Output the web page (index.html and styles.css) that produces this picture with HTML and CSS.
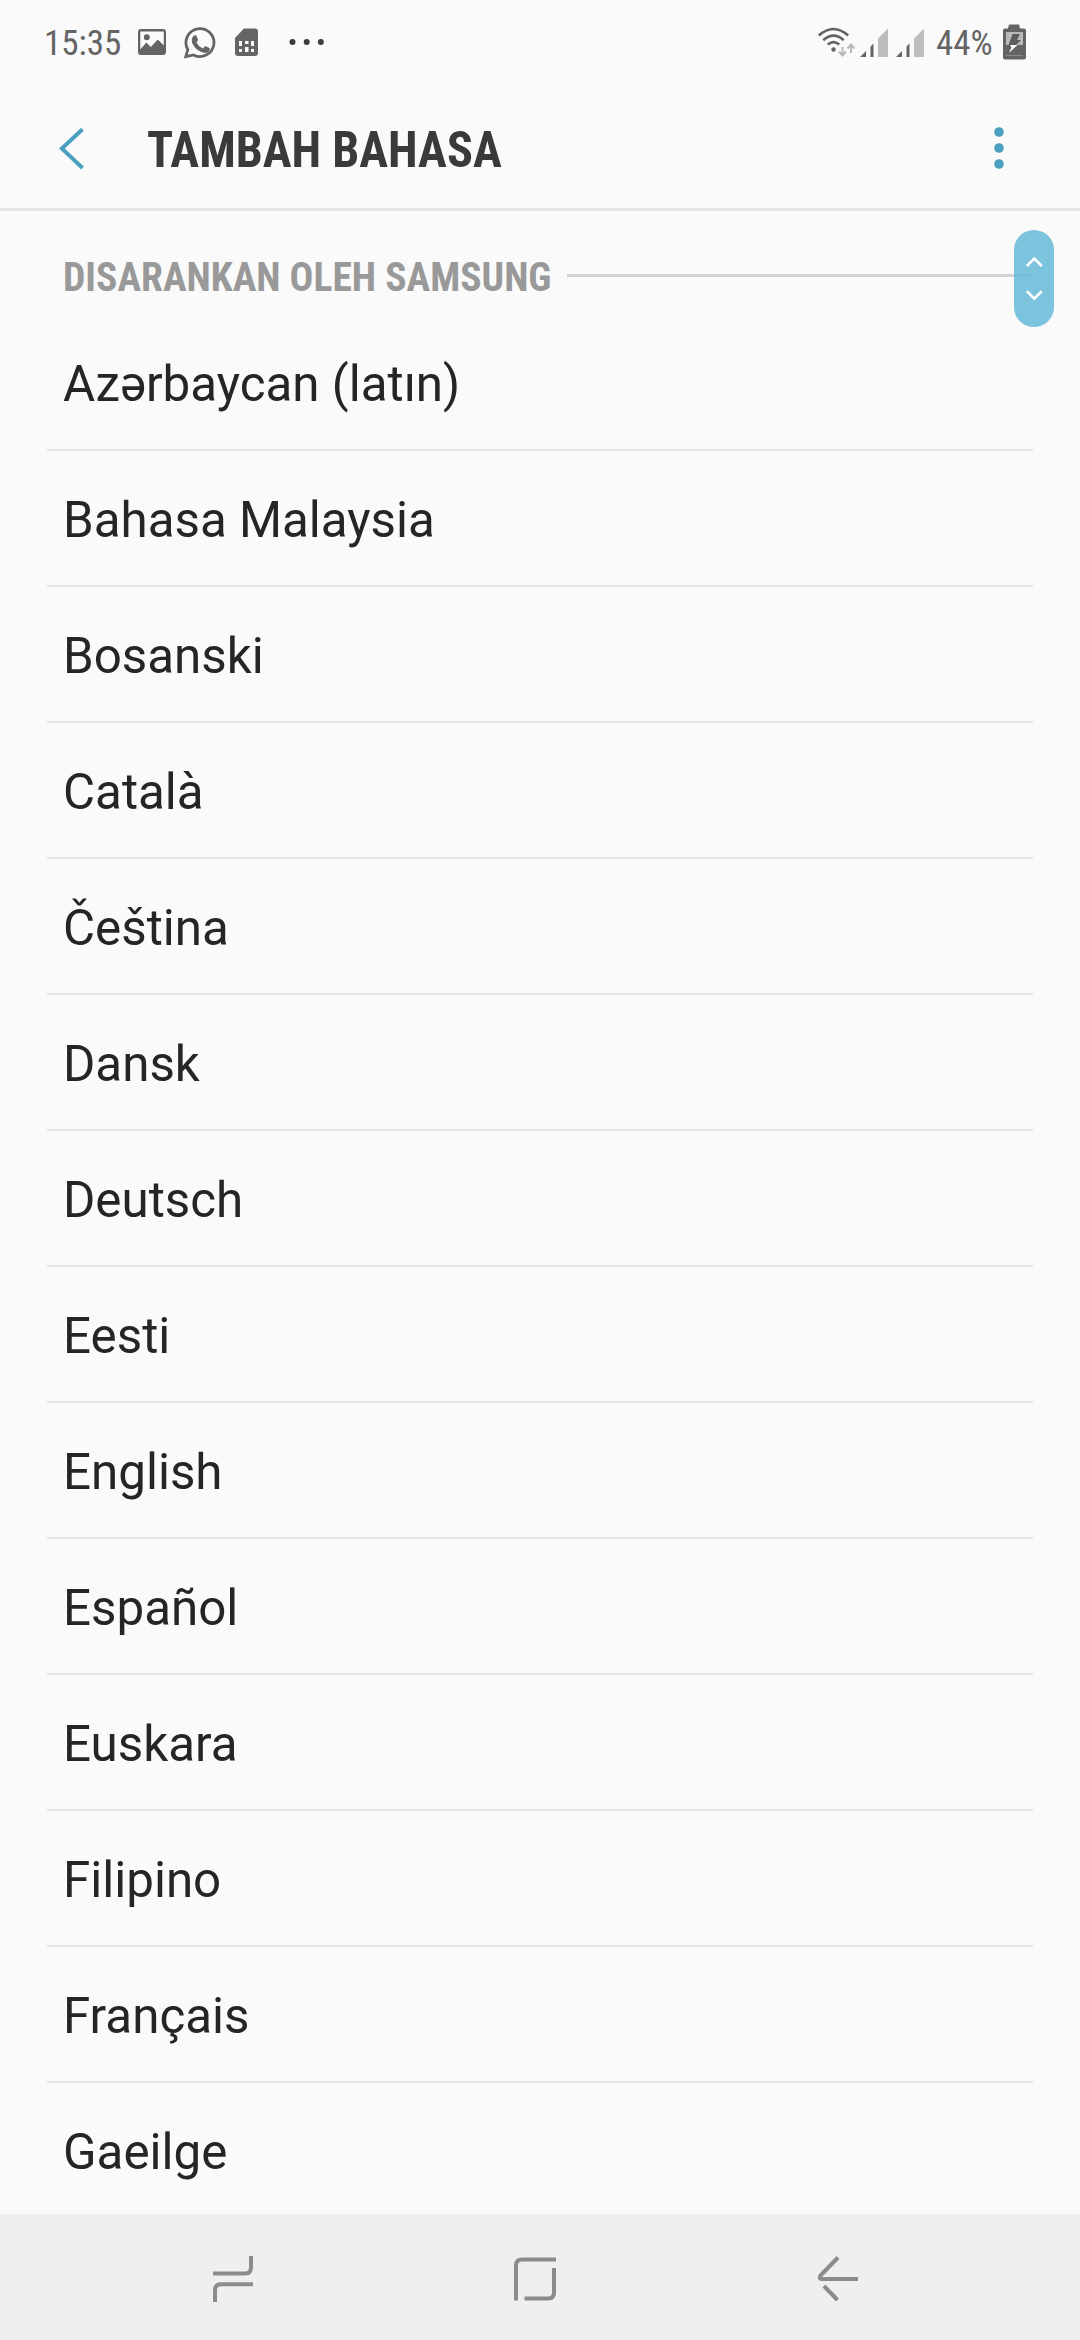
FILE: index.html
```html
<!DOCTYPE html>
<html lang="ms">
<head>
<meta charset="utf-8">
<title>Tambah bahasa</title>
<link rel="stylesheet" href="styles.css">
</head>
<body>
<div class="screen">
  <div class="status">
    <span class="clock"><span class="clock-text">15:35</span></span>
    <svg class="photo" width="28" height="26" viewBox="138 29 28 26"><path fill="#646464" fill-rule="evenodd" d="M141 29h22q3 0 3 3v20q0 3-3 3h-22q-3 0-3-3V32q0-3 3-3zM140.300 31.500v18l6-7 4.500 4.500 7-7.500 6 6v-14zM146.800 34.300a3 3 0 1 1 0 6 3 3 0 0 1 0-6z"/></svg>
    <svg class="chat" width="32" height="32" viewBox="183.500 27 32 32"><path fill="none" stroke="#646464" stroke-width="2.800" d="M185.300 56.700l2-7.200A14 14 0 1 1 193 55z"/><path fill="#646464" d="M192.600 36.200q1.500-1.700 3.200-.6l1.900 4.300-1.800 2.700q2.200 4.300 6.500 5.900l2.400-2.500 4.500 2.200q.5 2.500-2 4-2.800 1.700-7-.4-6.500-3.200-8.800-9.400-1-3.500 1.100-6.200z"/></svg>
    <svg class="sim" width="24" height="29" viewBox="235 28 24 29"><path fill="#646464" d="M244 28.500h11q3 0 3 3V53q0 3-3 3h-17q-3 0-3-3V38z"/><path fill="#fafafa" d="M239 41h3v5h-3zM245 41h3.500v3H245zM251 41h3v5h-3zM239 49h3v3h-3zM245 47h3.500v5H245zM251 49h3v3h-3z"/></svg>
    <svg class="more" width="36" height="8" viewBox="289 38 36 8"><g fill="#3c3c3c"><circle cx="292.500" cy="42" r="3"/><circle cx="306.700" cy="42" r="3"/><circle cx="320.800" cy="42" r="3"/></g></svg>
    <span class="spacer"></span>
    <svg class="wifi" width="40" height="32" viewBox="816 26 40 32"><g fill="none" stroke="#646464" stroke-width="2.600"><path d="M817.800 35.500q14.700-13 29.400 0M822.300 40.200q10.200-9 20.400 0M826.800 44.600q5.700-4.800 11.400 0"/></g><circle cx="832.500" cy="49.500" r="2.200" fill="#646464"/><path fill="none" stroke="#b9b9b9" stroke-width="2" d="M841.500 47v7.500M838 51.500l3.500 4 3.500-4M850 53v-8M846.500 48.500l3.500-4 3.500 4"/></svg>
    <svg class="signal" width="29" height="30" viewBox="859 28 29 30"><path fill="#646464" d="M859 57l6-6v6zM869.500 46.500l3-3V57h-3z"/><path fill="#bdbdbd" d="M877 38.500l10-10V57h-10z"/></svg>
    <svg class="signal" width="29" height="30" viewBox="859 28 29 30"><path fill="#646464" d="M859 57l6-6v6zM869.500 46.500l3-3V57h-3z"/><path fill="#bdbdbd" d="M877 38.500l10-10V57h-10z"/></svg>
    <span class="percent"><span class="percent-text">44%</span></span>
    <svg class="battery" width="24" height="37" viewBox="1001 24 24 37"><path fill="#646464" d="M1008 24.500h10l1 4h4q2 0 2 2v27q0 2-2 2h-19q-2 0-2-2v-27q0-2 2-2h3z"/><path fill="#b9b9b9" d="M1005 32h17v13h-17z"/><path fill="#5c5c5c" d="M1011.500 34h7.500l-3 6h4l-5 5h-7.500z"/><path fill="#fff" d="M1009 45h7.500l-8.500 8 2.500-6z"/><path fill="#8a8a8a" d="M1005 55h17v1h-17z"/></svg>
  </div>
  <header class="bar">
    <svg class="back" width="26" height="44" viewBox="59 127 26 44"><path fill="none" stroke="#4b9fbf" stroke-width="4" d="M82.500 129.200L61.800 148.500l20.700 19.500"/></svg>
    <h1 class="title"><span class="title-text">TAMBAH BAHASA</span></h1>
    <span class="spacer"></span>
    <svg class="menu" width="12" height="44" viewBox="0 0 12 44"><g fill="#4b9fbf"><circle cx="6" cy="6" r="4.800"/><circle cx="6" cy="22" r="4.800"/><circle cx="6" cy="38" r="4.800"/></g></svg>
  </header>
  <main class="list">
    <div class="section"><h2 class="label"><span class="label-text">DISARANKAN OLEH SAMSUNG</span></h2><span class="rule"></span></div>
    <ul class="rows">
      <li class="row">Azərbaycan (latın)</li>
      <li class="row">Bahasa Malaysia</li>
      <li class="row">Bosanski</li>
      <li class="row">Català</li>
      <li class="row">Čeština</li>
      <li class="row">Dansk</li>
      <li class="row">Deutsch</li>
      <li class="row">Eesti</li>
      <li class="row">English</li>
      <li class="row">Español</li>
      <li class="row">Euskara</li>
      <li class="row">Filipino</li>
      <li class="row">Français</li>
      <li class="row">Gaeilge</li>
    </ul>
    <div class="scroller"><svg width="40" height="96" viewBox="1014 230 40 96"><path fill="none" stroke="#fff" stroke-width="2.600" d="M1026.800 266l7.500-7.500 7.500 7.500M1026.800 291.200l7.500 7.500 7.500-7.500"/></svg></div>
  </main>
  <nav class="nav">
    <svg width="42" height="48" viewBox="212 2255 42 48"><path fill="none" stroke="#8c8c8c" stroke-width="4" d="M213 2273.500h32q6 0 6-6V2256M253 2284.300h-32q-6 0-6 6V2302"/></svg>
    <svg class="home" width="44" height="46" viewBox="513 2256 44 46"><path fill="none" stroke="#8c8c8c" stroke-width="4" d="M556 2259.500h-34q-6 0-6 6V2300.500M554 2268v24.500q0 6-6 6h-23.500"/></svg>
    <svg width="42" height="48" viewBox="817 2255 42 48"><path fill="none" stroke="#8c8c8c" stroke-width="4" d="M838 2257.500L820.500 2275.500Q818.500 2279 822 2279H858M824 2286l13.500 14"/></svg>
  </nav>
</div>
</body>
</html>
```
FILE: styles.css
```css
* { box-sizing: border-box; }
body {
  margin: 0;
  background: #fafafa;
  color: #252525;
  font-family: Roboto, "Noto Sans", sans-serif;
}
svg { display: block; flex: none; }
.screen {
  width: 1080px;
  height: 2340px;
  display: flex;
  flex-direction: column;
  overflow: hidden;
}
.spacer { flex: 1; }

.clock-text, .percent-text, .title-text, .label-text {
  display: inline-block;
  transform-origin: 0 50%;
  white-space: nowrap;
  font-family: "Roboto Condensed", Roboto, sans-serif;
  font-stretch: 75%;
}
.title-text { transform: scaleX(.974); }
.label-text { transform: scaleX(.965); }

.status {
  height: 84px;
  flex: none;
  display: flex;
  align-items: center;
  padding: 0 54px 0 44px;
  color: #646464;
  font-size: 35px;
}
.clock { width: 94px; padding-top: 3px; }
.photo { margin-right: 17.500px; }
.chat { margin: 2px 19.500px 0 0; }
.sim { margin: 1px 30px 0 0; }
.wifi { margin-right: 3px; }
.signal { margin: 2px 7px 0 0; }
.percent { width: 70px; padding: 3px 0 0 4px; }
.battery { margin-top: 1px; }

.bar {
  height: 127px;
  flex: none;
  display: flex;
  align-items: center;
  padding: 6px 75.500px 0 59px;
  border-bottom: 3px solid #e6e6e6;
}
.title {
  margin: 2px 0 0 62px;
  width: 360px;
  font-size: 49.500px;
  line-height: 60px;
  font-weight: 700;
  color: #3a3a3a;
}
.menu { margin-top: -3px; }

.list {
  position: relative;
  flex: 1;
  min-height: 0;
  overflow: hidden;
}
.section {
  height: 104px;
  padding: 0 47px 0 63px;
  display: flex;
  align-items: center;
}
.label {
  margin: 28px 0 0;
  width: 504px;
  flex: none;
  font-size: 41px;
  line-height: 48px;
  font-weight: 700;
  color: #999;
}
.rule {
  flex: 1;
  height: 3px;
  margin-top: 25px;
  background: #d2d2d2;
}
.rows {
  list-style: none;
  margin: 0;
  padding: 0 47px;
}
.row {
  height: 136px;
  padding: 39px 16px 0;
  border-bottom: 2px solid #e4e4e4;
  font-size: 49.300px;
  line-height: 60px;
}
.scroller {
  position: absolute;
  top: 19px;
  right: 26px;
  width: 40px;
  height: 97px;
  border-radius: 20px;
  background: rgba(101, 185, 216, .85);
}

.nav {
  height: 126px;
  flex: none;
  display: flex;
  align-items: center;
  justify-content: space-between;
  padding: 4px 221px 0 212px;
  background: #efefef;
}
.home { margin-left: -1px; }
```
